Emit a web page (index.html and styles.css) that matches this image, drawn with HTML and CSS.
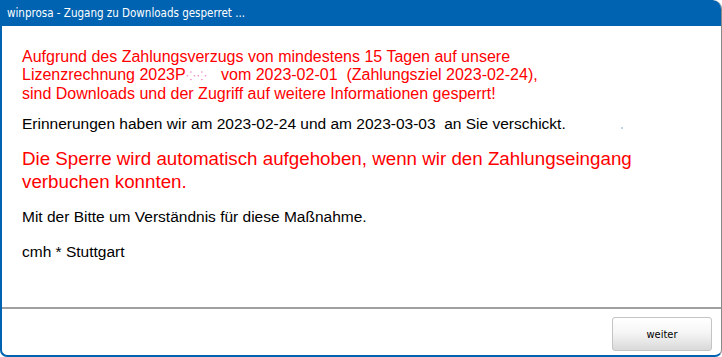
FILE: index.html
```html
<!DOCTYPE html>
<html lang="de">
<head>
    <meta charset="UTF-8">
    <title>winprosa - Zugang zu Downloads gesperret</title>
    <link rel="stylesheet" href="styles.css">
</head>
<body>
    <div class="window">
        <div class="titlebar">winprosa - Zugang zu Downloads gesperret ...</div>
        <div class="content">
            <p class="warn">Aufgrund des Zahlungsverzugs von mindestens 15 Tagen auf unsere<br>
            Lizenzrechnung 2023P<span class="masked">&#8280;&#8280;</span>&nbsp;&nbsp; vom 2023-02-01 &nbsp;(Zahlungsziel 2023-02-24),<br>
            sind Downloads und der Zugriff auf weitere Informationen gesperrt!</p>
            <p class="info">Erinnerungen haben wir am 2023-02-24 und am 2023-03-03 &nbsp;an Sie verschickt.<span class="dot"></span></p>
            <p class="notice">Die Sperre wird automatisch aufgehoben, wenn wir den Zahlungseingang<br>verbuchen konnten.</p>
            <p class="info">Mit der Bitte um Verständnis für diese Maßnahme.</p>
            <p class="info">cmh * Stuttgart</p>
        </div>
        <div class="footer">
            <button class="btn">weiter</button>
        </div>
    </div>
</body>
</html>
```

FILE: styles.css
```css
/* Reset */
body, html {
    margin: 0;
    padding: 0;
    background: #ffffff;
}

/* Dialog window */
.window {
    width: 719px;
    height: 355px;
    border-left: 2px solid #0063b1;
    border-right: 1px solid #8a8a8a;
    border-bottom: 2px solid #0063b1;
    border-radius: 0 9px 7px 7px;
    overflow: hidden;
    display: flex;
    flex-direction: column;
}

.titlebar {
    height: 26px;
    margin-left: -2px;
    margin-right: -1px;
    padding-left: 7px;
    background: #0063b1;
    color: #ffffff;
    font-family: "DejaVu Sans Condensed", "DejaVu Sans", sans-serif;
    font-size: 11.5px;
    line-height: 26px;
    border-top-right-radius: 9px;
}

/* Message text */
.content {
    flex: 1;
    padding: 22px 20px 0 20px;
    font-family: "Liberation Sans", Arial, sans-serif;
    border-bottom: 2px solid #a0a0a0;
}

.content p {
    margin: 0;
}

.warn {
    color: #ff0000;
    font-size: 16px;
    line-height: 18px;
}

.masked {
    color: #f07cc4;
    font-size: 12px;
    letter-spacing: 1px;
}

.info {
    color: #000000;
    font-size: 15.5px;
    line-height: 18px;
    margin-top: 15px !important;
}

.content .warn + .info {
    margin-top: 12px !important;
}

.dot {
    display: inline-block;
    width: 2px;
    height: 2px;
    margin-left: 55px;
    background: #b8d6ee;
}

.notice {
    color: #ff0000;
    font-size: 18.75px;
    line-height: 23px;
    margin-top: 14px !important;
}

.content .info:last-child {
    margin-top: 17px !important;
}

/* Button bar */
.footer {
    height: 46px;
    display: flex;
    justify-content: flex-end;
    align-items: center;
    padding-right: 9px;
}

.btn {
    width: 100px;
    height: 34px;
    margin-top: 4px;
    border: 1px solid #c4c4c4;
    border-radius: 3px;
    background: linear-gradient(#ffffff 0%, #f6f6f6 45%, #d9d9d9 100%);
    font-family: "DejaVu Sans Condensed", "DejaVu Sans", sans-serif;
    font-size: 11px;
    color: #000000;
}
```
